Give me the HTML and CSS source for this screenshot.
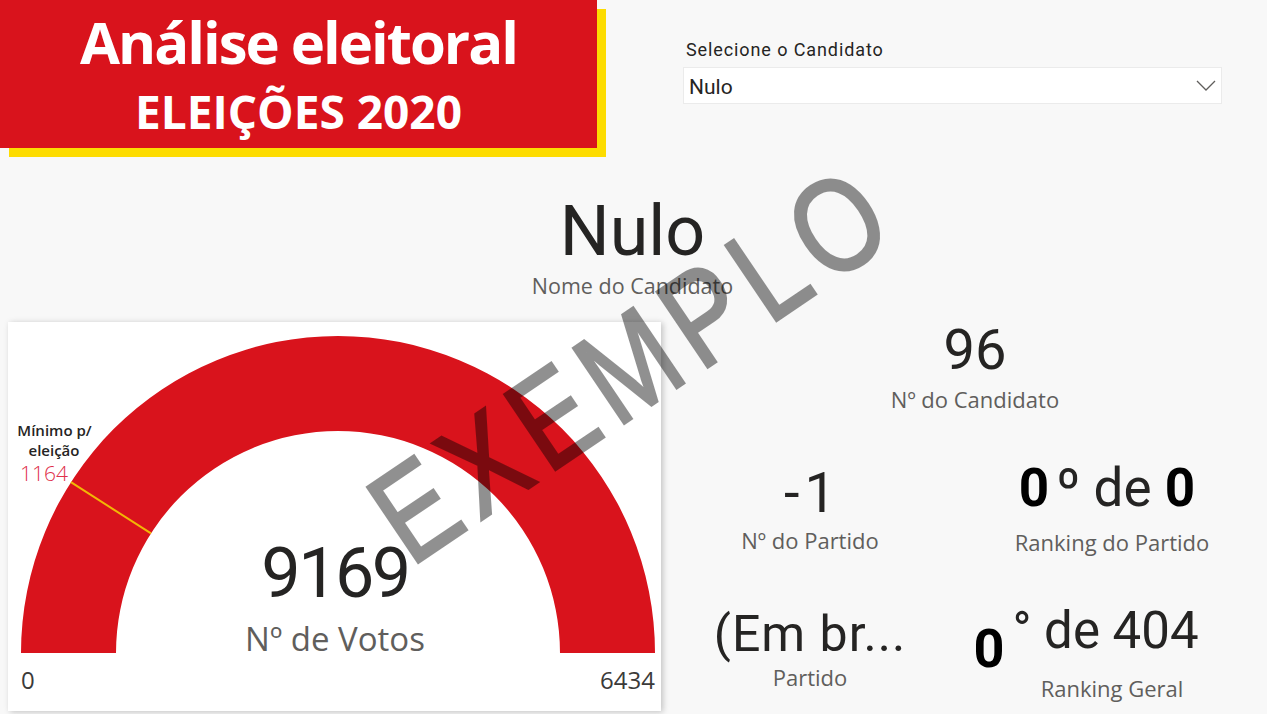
FILE: index.html
```html
<!DOCTYPE html>
<html lang="pt-BR">
<head>
<meta charset="utf-8">
<title>Análise eleitoral</title>
<link rel="stylesheet" href="styles.css">
</head>
<body>
<div class="page">
  <div class="top">
    <div class="banner">
      <div class="t1">Análise eleitoral</div>
      <div class="t2">ELEIÇÕES 2020</div>
    </div>
    <div class="slicer">
      <div class="slicer-label">Selecione o Candidato</div>
      <div class="slicer-box">
        <span class="slicer-value">Nulo</span>
        <svg class="chev" width="20" height="11" viewBox="0 0 20 11"><path d="M1 1 L10 10 L19 1" fill="none" stroke="#605e5c" stroke-width="1.3"/></svg>
      </div>
    </div>
  </div>

  <div class="name-card">
    <div class="name-value">Nulo</div>
    <div class="label">Nome do Candidato</div>
  </div>

  <div class="bottom">
    <div class="gauge-card">
      <svg class="gauge" width="653" height="389" viewBox="0 0 653 389">
        <path d="M13 331 A317 317 0 0 1 647 331 L552 331 A222 222 0 0 0 108 331 Z" fill="#d9131c"/>
        <line x1="62.9" y1="160.2" x2="143" y2="211.4" stroke="#f2b705" stroke-width="2"/>
        <text class="g-min" x="46.5" y="113.5" text-anchor="middle">Mínimo p/</text>
        <text class="g-min" x="46" y="134" text-anchor="middle">eleição</text>
        <text class="g-target" x="12" y="158.5">1164</text>
        <text class="g-value" x="327" y="275" text-anchor="middle">9169</text>
        <text class="g-label" x="327" y="329" text-anchor="middle">Nº de Votos</text>
        <text class="g-axis" x="13" y="367">0</text>
        <text class="g-axis" x="647" y="367" text-anchor="end">6434</text>
      </svg>
    </div>

    <div class="metrics">
      <div class="row1">
        <div class="kpi">
          <div class="kv kv-56">96</div>
          <div class="label l1">Nº do Candidato</div>
        </div>
      </div>
      <div class="row2">
        <div class="kpi kpi-partnum">
          <div class="kv kv-56"><span class="minus">-</span>1</div>
          <div class="label l2a">Nº do Partido</div>
        </div>
        <div class="kpi">
          <div class="kv kv-rank"><span class="bold0">0</span><span class="ord">º</span> de <span class="bold0 last0">0</span></div>
          <div class="label l2b">Ranking do Partido</div>
        </div>
      </div>
      <div class="row3">
        <div class="kpi kpi-party">
          <div class="kv kv-48">(Em br...</div>
          <div class="label l3a">Partido</div>
        </div>
        <div class="kpi">
          <div class="kv kv-geral"><span class="big0">0</span><span class="deg">°</span> de 404</div>
          <div class="label l3b">Ranking Geral</div>
        </div>
      </div>
    </div>
  </div>

  <div class="watermark">EXEMPLO</div>
</div>
</body>
</html>
```

FILE: styles.css
```css
* { box-sizing: border-box; }
html, body { margin: 0; padding: 0; }
body {
  background: #f8f8f8;
  font-family: "Open Sans", "Noto Sans", sans-serif;
  color: #252423;
  width: 1267px;
  height: 714px;
  overflow: hidden;
}
.page { position: relative; width: 1267px; height: 714px; }

/* top */
.top { display: flex; align-items: flex-start; }
.banner {
  width: 597px;
  height: 148px;
  background: #d9131c;
  box-shadow: 9px 9px 0 #fddc00;
  display: flex;
  flex-direction: column;
  align-items: center;
  padding-top: 13px;
  color: #fff;
  font-family: "Open Sans", sans-serif;
  font-weight: 700;
}
.t1 { font-size: 58px; line-height: 58px; letter-spacing: -2px; }
.t2 { font-size: 46px; line-height: 46px; margin-top: 17px; }

.slicer { margin-left: 86px; margin-top: 41px; width: 539px; }
.slicer-label {
  font-family: Roboto, sans-serif;
  font-size: 18px;
  line-height: 18px;
  letter-spacing: 0.9px;
  padding-left: 3px;
  color: #252423;
}
.slicer-box {
  margin-top: 8px;
  height: 37px;
  background: #fff;
  border: 1px solid #ebebeb;
  display: flex;
  align-items: center;
  justify-content: space-between;
  padding: 0 5px 0 5px;
}
.slicer-value { font-family: Roboto, sans-serif; font-size: 21px; color: #252423; padding-top: 2px; }
.chev { display: block; margin-top: -1px; }

/* name card */
.name-card { margin-top: 48px; text-align: center; padding-right: 2px; }
.name-value { font-family: Roboto, sans-serif; font-size: 70px; line-height: 70px; color: #252423; }
.label { font-family: "Open Sans", sans-serif; font-size: 22px; line-height: 22px; color: #605e5c; }
.name-card .label { margin-top: 9px; font-size: 21.5px; }

/* bottom */
.bottom { display: flex; margin-top: 25px; }
.gauge-card {
  margin-left: 8px;
  width: 653px;
  height: 389px;
  background: #fff;
  box-shadow: 2px 1px 6px rgba(0,0,0,0.22);
}
.gauge { display: block; }
.g-min { font-family: "Open Sans", sans-serif; font-weight: 600; font-size: 15px; fill: #252423; }
.g-target { font-family: "Open Sans", sans-serif; font-weight: 300; font-size: 21px; fill: #e0304a; }
.g-value { font-family: Roboto, sans-serif; font-size: 70px; letter-spacing: -2.5px; fill: #252423; }
.g-label { font-family: "Open Sans", sans-serif; font-size: 33px; fill: #605e5c; }
.g-axis { font-family: "Open Sans", sans-serif; font-size: 24px; fill: #3b3a39; }

.metrics { width: 606px; }
.kpi { text-align: center; }
.kv { font-family: Roboto, sans-serif; color: #252423; }
.kv-56 { font-size: 56px; line-height: 56px; }
.kv-48 { font-size: 50px; line-height: 48px; letter-spacing: 1px; }

.row1 { padding-left: 22px; }
.l1 { margin-top: 10px; }

.row2, .row3 { display: grid; grid-template-columns: 298px 306px; }
.row2 { margin-top: 51px; }
.kpi-partnum { padding-top: 4px; }
.minus { margin-right: 5px; }
.l2a { margin-top: 8px; }
.kv-rank { font-size: 53px; line-height: 54px; padding-right: 10px; }
.bold0 { font-weight: 700; color: #000; }
.ord { margin-left: 7px; }
.l2b { margin-top: 16px; }

.row3 { margin-top: 55px; }
.kpi-party { padding-top: 2px; }
.l3a { margin-top: 8px; }
.kv-geral { font-size: 51px; line-height: 46px; height: 46px; padding-right: 52px; }
.big0 { font-size: 54px; line-height: 0; font-weight: 700; color: #000; vertical-align: -19px; }
.deg { margin-left: 8px; }
.l3b { margin-top: 23px; }

/* watermark */
.watermark {
  position: absolute;
  left: 629px;
  top: 366px;
  transform: translate(-50%, -50%) rotate(-34deg) scaleX(0.82);
  font-family: "Liberation Sans", Arial, sans-serif;
  font-size: 132px;
  line-height: 132px;
  letter-spacing: 13px;
  padding-left: 13px;
  color: #000;
  -webkit-text-stroke: 3px #000;
  opacity: 0.43;
  white-space: nowrap;
  pointer-events: none;
}
```
